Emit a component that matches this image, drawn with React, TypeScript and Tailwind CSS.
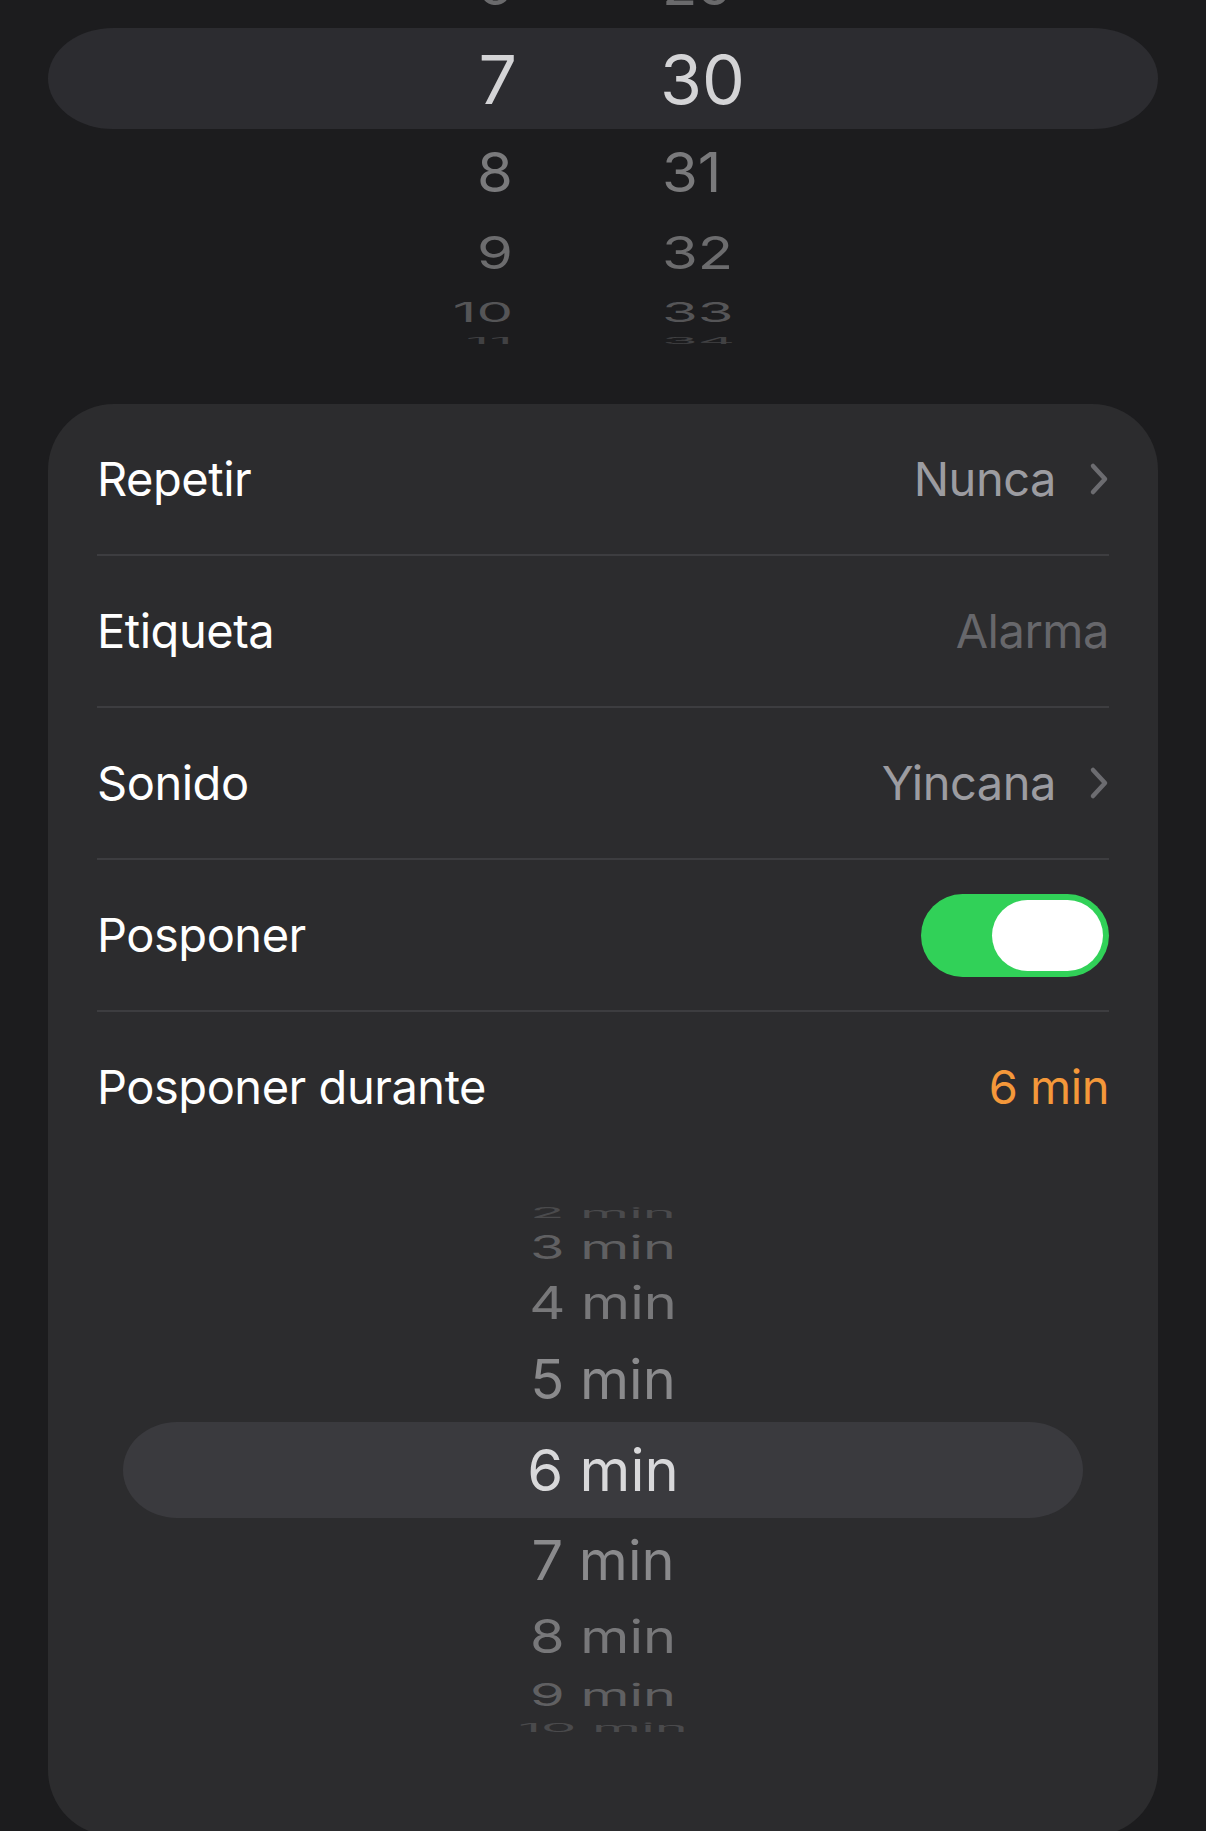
import React from "react";

function TimeRow({
  hClass,
  tClass,
  hour,
  minute,
}: {
  hClass: string;
  tClass: string;
  hour: string;
  minute: string;
}) {
  return (
    <div className={`flex items-center ${hClass}`}>
      <div className={`w-[513px] text-right leading-none ${tClass}`}>{hour}</div>
      <div className="w-[149px] shrink-0" />
      <div className={`leading-none ${tClass}`}>{minute}</div>
    </div>
  );
}

function DurRow({ hClass, tClass, label }: { hClass: string; tClass: string; label: string }) {
  return (
    <div className={`flex items-center justify-center ${hClass}`}>
      <div className={`text-[56px] leading-none whitespace-nowrap ${tClass}`}>{label}</div>
    </div>
  );
}

function Chevron() {
  return (
    <svg width="20" height="34" viewBox="0 0 20 34" className="ml-[33px] shrink-0">
      <polyline
        points="4,4 16,17 4,30"
        fill="none"
        stroke="#6c6c70"
        strokeWidth="4.5"
        strokeLinecap="round"
        strokeLinejoin="round"
      />
    </svg>
  );
}

function Sep() {
  return <div className="h-[2px] bg-[#3d3d40]" />;
}

function Row({ label, children }: { label: string; children?: React.ReactNode }) {
  return (
    <div className="flex h-[150px] items-center justify-between">
      <span className="text-[47px] tracking-[-0.01em] text-white">{label}</span>
      <div className="flex items-center text-[47px] tracking-[-0.01em]">{children}</div>
    </div>
  );
}

export default function App() {
  return (
    <div className="min-h-screen w-[1206px] overflow-hidden bg-[#1c1c1e] font-['Inter',sans-serif]">
      {/* Time wheel */}
      <div className="h-[350px] overflow-hidden">
        <div className="-mt-[59px] flex flex-col">
          <TimeRow hClass="h-[87px]" tClass="text-[58px] text-[#6a6a6c] scale-y-[0.95]" hour="6" minute="29" />
          <div className="mx-[48px] flex h-[101px] items-center rounded-[66px/51px] bg-[#2c2c30]">
            <div className="w-[469px] text-right text-[68px] leading-none text-[#d4d4d6]">7</div>
            <div className="w-[143px] shrink-0" />
            <div className="text-[68px] leading-none text-[#d4d4d6]">30</div>
          </div>
          <TimeRow hClass="h-[86px]" tClass="text-[58px] text-[#7a7a7c] scale-y-[0.95]" hour="8" minute="31" />
          <TimeRow hClass="h-[76px]" tClass="text-[58px] text-[#6c6c6e] scale-y-[0.78]" hour="9" minute="32" />
          <TimeRow hClass="h-[42px]" tClass="text-[58px] text-[#555557] scale-y-[0.47]" hour="10" minute="33" />
          <TimeRow hClass="h-[16px]" tClass="text-[58px] text-[#414143] scale-y-[0.15]" hour="11" minute="34" />
        </div>
      </div>

      {/* Settings card */}
      <div className="mx-[48px] mt-[54px] rounded-[66px] bg-[#2c2c2e] px-[49px] pb-[98px]">
        <Row label="Repetir">
          <span className="text-[#9c9ca1]">Nunca</span>
          <Chevron />
        </Row>
        <Sep />
        <Row label="Etiqueta">
          <span className="text-[#67676b]">Alarma</span>
        </Row>
        <Sep />
        <Row label="Sonido">
          <span className="text-[#9c9ca1]">Yincana</span>
          <Chevron />
        </Row>
        <Sep />
        <Row label="Posponer">
          <div className="flex h-[83px] w-[188px] items-center justify-end rounded-full bg-[#31d158] p-[6px]">
            <div className="h-[71px] w-[111px] rounded-full bg-white" />
          </div>
        </Row>
        <Sep />
        <Row label="Posponer durante">
          <span className="text-[#f4983a]">6 min</span>
        </Row>

        {/* Duration wheel */}
        <div className="mt-[38px] flex flex-col">
          <DurRow hClass="h-[26px]" tClass="text-[#4a4a4c] scale-y-[0.25]" label="2 min" />
          <DurRow hClass="h-[44px]" tClass="text-[#606062] scale-y-[0.57]" label="3 min" />
          <DurRow hClass="h-[66px]" tClass="text-[#78787a] scale-y-[0.8]" label="4 min" />
          <DurRow hClass="h-[86px]" tClass="text-[#8a8a8c] scale-y-[0.98]" label="5 min" />
          <div className="mx-[26px] flex h-[96px] items-center justify-center rounded-[54px/48px] bg-[#3a3a3e]">
            <div className="text-[58px] leading-none text-[#d8d8da]">6 min</div>
          </div>
          <DurRow hClass="h-[84px]" tClass="text-[#8a8a8c] scale-y-[0.98]" label="7 min" />
          <DurRow hClass="h-[70px]" tClass="text-[#78787a] scale-y-[0.82]" label="8 min" />
          <DurRow hClass="h-[46px]" tClass="text-[#606062] scale-y-[0.55]" label="9 min" />
          <DurRow hClass="h-[20px]" tClass="text-[#4a4a4c] scale-y-[0.22]" label="10 min" />
        </div>
      </div>
    </div>
  );
}
